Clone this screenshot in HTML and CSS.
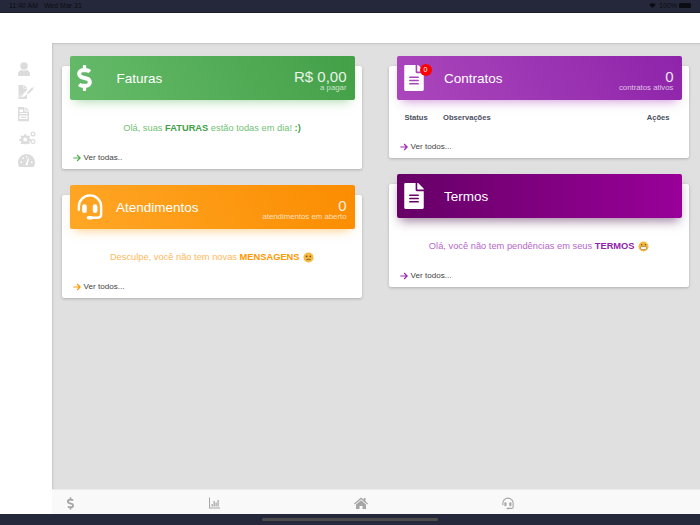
FILE: index.html
```html
<!DOCTYPE html>
<html lang="pt-BR">
<head>
<meta charset="utf-8">
<title>Painel</title>
<link rel="stylesheet" href="styles.css">
</head>
<body>
<svg class="defs" width="0" height="0" aria-hidden="true">
  <symbol id="i-dollar" viewBox="0 0 288 512"><path d="M209.2 233.4l-108-31.6C88.7 198.2 80 186.5 80 173.5c0-16.3 13.2-29.5 29.5-29.5h66.3c12.2 0 24.2 3.7 34.2 10.5 6.1 4.1 14.3 3.1 19.5-2l34.8-34c7.1-6.9 6.1-18.4-1.8-24.5C238 74.8 207.4 64.1 176 64V16c0-8.8-7.2-16-16-16h-32c-8.8 0-16 7.2-16 16v48h-2.5C45.8 64-5.4 118.7.5 183.6c4.2 46.1 39.4 83.6 83.8 96.6l102.5 30c12.5 3.7 21.2 15.3 21.2 28.3 0 16.3-13.2 29.5-29.5 29.5h-66.3C100 368 88 364.3 78 357.5c-6.1-4.1-14.3-3.1-19.5 2l-34.8 34c-7.1 6.9-6.1 18.4 1.8 24.5 24.5 19.2 55.1 29.9 86.5 30v48c0 8.8 7.2 16 16 16h32c8.8 0 16-7.2 16-16v-48.2c46.6-.9 90.3-28.6 105.7-72.7 21.5-61.6-14.6-124.8-72.5-141.7z"/></symbol>
  <symbol id="i-file" viewBox="0 0 384 512"><path d="M224 136V0H24C10.7 0 0 10.7 0 24v464c0 13.3 10.7 24 24 24h336c13.3 0 24-10.7 24-24V160H248c-13.2 0-24-10.8-24-24zm64 236c0 6.6-5.4 12-12 12H108c-6.6 0-12-5.4-12-12v-8c0-6.6 5.4-12 12-12h168c6.6 0 12 5.4 12 12v8zm0-64c0 6.6-5.4 12-12 12H108c-6.6 0-12-5.4-12-12v-8c0-6.6 5.4-12 12-12h168c6.6 0 12 5.4 12 12v8zm0-72v8c0 6.6-5.4 12-12 12H108c-6.6 0-12-5.4-12-12v-8c0-6.6 5.4-12 12-12h168c6.6 0 12 5.4 12 12zm96-114.1v6.1H256V0h6.1c6.4 0 12.5 2.5 17 7l97.9 98c4.5 4.5 7 10.6 7 16.9z"/></symbol>
  <symbol id="i-headset" viewBox="0 0 28 28"><path fill="none" stroke="currentColor" stroke-width="2.600" stroke-linecap="round" d="M2 17V13.500C2 6.500 7.500 1.500 14 1.500s12 5 12 12V22c0 2.500-1.500 3.500-4 3.500h-8"/><rect x="5.500" y="11" width="5" height="9.500" rx="2.400"/><rect x="17" y="11" width="5" height="9.500" rx="2.400"/><rect x="10.500" y="23.700" width="7" height="3.800" rx="1.900"/></symbol>
  <symbol id="i-arrow" viewBox="0 0 12 12"><path fill="none" stroke="currentColor" stroke-width="1.800" d="M0.500 6H10.500M6.200 1.500L10.700 6L6.200 10.500"/></symbol>
  <symbol id="i-user" viewBox="0 0 24 29"><circle cx="12" cy="8" r="7.500"/><path d="M0 25c0-6 3.500-9 7-9 1.500.8 3 1.200 5 1.200s3.500-.4 5-1.200c3.500 0 7 3 7 9 0 2.500-1 4-3 4H3c-2 0-3-1.500-3-4z"/></symbol>
  <symbol id="i-sign" viewBox="0 0 32 29"><path d="M1 0h10v7h7v3L9 19l-1 5 5-1 5-5v11H1z"/><path d="M12 0l6 6h-6z"/><path d="M19 14L28 5l3 3-9 9-4 1z"/><path d="M29 4l1-1 2 2-1 1z"/><path fill="none" stroke="#fff" stroke-width="1.400" d="M3 24c2-4 3-4 4-1s2 1 3 0"/></symbol>
  <symbol id="i-doc" viewBox="0 0 22 29"><path d="M0 0h13v9h9v20H0zM3 5v5h7V5zM3 12v2h16v-2zM3 17v7h16v-7z" fill-rule="evenodd"/><path d="M15 0l7 7h-7z"/><rect x="6" y="19.500" width="10" height="2.500"/></symbol>
  <symbol id="i-cogs" viewBox="0 0 36 28"><path d="M13 6h3l.8 3 2.400 1 2.700-1.500 2 2-1.500 2.700 1 2.400 3 .8v3l-3 .8-1 2.400 1.500 2.700-2 1.400-2.700-1-2.400.6-.8 0h-3l-.8 0-2.400-.6-2.700 1-2-1.400 1.500-2.700-1-2.400-3-.8v-3l3-.8 1-2.400-1.500-2.700 2-2 2.700 1.500 2.400-1zM14.500 13a4 4 0 1 0 0 8 4 4 0 0 0 0-8z" fill-rule="evenodd"/><circle cx="30" cy="6" r="3.800" fill="none" stroke="currentColor" stroke-width="2.400"/><circle cx="30" cy="21" r="3.800" fill="none" stroke="currentColor" stroke-width="2.400"/></symbol>
  <symbol id="i-gauge" viewBox="0 0 34 26"><path fill-rule="evenodd" d="M17 0C7.500 0 0 7.500 0 17c0 3 .7 6 2 9h30c1.300-3 2-6 2-9C34 7.500 26.500 0 17 0zM5 15h3v3H5zM9 7h3v3H9zM16 4h2.500v3H16zM26 15h3v3h-3zM15 22l5-14 2 .6-3 14.400z"/></symbol>
  <symbol id="i-chart" viewBox="0 0 24 24"><path d="M1 1h2v20h20v2H1z"/><rect x="6" y="14" width="2.500" height="5"/><rect x="10" y="8" width="2.500" height="11"/><rect x="14" y="11" width="2.500" height="8"/><rect x="18" y="6" width="2.500" height="13"/></symbol>
  <symbol id="i-home" viewBox="0 0 28 24"><path d="M14 1L0 13l1.500 2L14 4.500 26.500 15l1.500-2-5-4.300V2h-3.500v3.700z"/><path d="M14 6.500L4 15v9h7v-6h6v6h7v-9z"/></symbol>
  <symbol id="e-meh" viewBox="0 0 12 12"><circle cx="6" cy="6" r="5.500" fill="#f5b942"/><circle cx="4" cy="4.800" r=".9" fill="#6b4a14"/><circle cx="8" cy="4.800" r=".9" fill="#6b4a14"/><path d="M3.800 8.400Q6 7.300 8.200 8.400" fill="none" stroke="#6b4a14" stroke-width=".9"/></symbol>
  <symbol id="e-grin" viewBox="0 0 12 12"><circle cx="6" cy="6" r="5.500" fill="#f5b942"/><circle cx="4" cy="4" r=".8" fill="#6b4a14"/><circle cx="8" cy="4" r=".8" fill="#6b4a14"/><rect x="2.600" y="6.200" width="6.800" height="3" rx="1.400" fill="#fff" stroke="#6b4a14" stroke-width=".5"/></symbol>
</svg>

<div class="device">
  <header class="statusbar">
    <span class="clock">11:40 AM&nbsp;&nbsp; Wed Mar 31</span>
    <span class="sys">
      <svg class="wifi" viewBox="0 0 16 12"><path d="M8 12L0 4C4.500-.5 11.500-.5 16 4z"/></svg>
      100%
      <span class="battery"></span>
    </span>
  </header>
  <div class="topbar"></div>
  <div class="shell">
    <nav class="sidebar">
      <svg class="s-user"><use href="#i-user"/></svg>
      <svg class="s-sign"><use href="#i-sign"/></svg>
      <svg class="s-doc"><use href="#i-doc"/></svg>
      <svg class="s-cogs"><use href="#i-cogs"/></svg>
      <svg class="s-gauge"><use href="#i-gauge"/></svg>
    </nav>
    <div class="content">
      <main class="dashboard">
        <div class="column">
          <section class="card green">
            <div class="card-head">
              <svg class="ico ico-dollar"><use href="#i-dollar"/></svg>
              <h2>Faturas</h2>
              <div class="stat"><strong>R$ 0,00</strong><small>a pagar</small></div>
            </div>
            <p class="msg">Olá, suas <b>FATURAS</b> estão todas em dia! <b>:)</b></p>
            <a class="more"><svg><use href="#i-arrow"/></svg>Ver todas..</a>
          </section>
          <section class="card orange">
            <div class="card-head">
              <svg class="ico ico-headset"><use href="#i-headset"/></svg>
              <h2>Atendimentos</h2>
              <div class="stat"><strong>0</strong><small>atendimentos em aberto</small></div>
            </div>
            <p class="msg">Desculpe, você não tem novas <b>MENSAGENS</b> <svg class="emoji"><use href="#e-meh"/></svg></p>
            <a class="more"><svg><use href="#i-arrow"/></svg>Ver todos...</a>
          </section>
        </div>
        <div class="column">
          <section class="card purple">
            <div class="card-head">
              <span class="file-wrap">
                <svg class="ico ico-file"><use href="#i-file"/></svg>
                <span class="badge">0</span>
              </span>
              <h2>Contratos</h2>
              <div class="stat"><strong>0</strong><small>contratos ativos</small></div>
            </div>
            <div class="table-head"><span class="th-status">Status</span><span class="th-obs">Observações</span><span class="th-act">Ações</span></div>
            <a class="more"><svg><use href="#i-arrow"/></svg>Ver todos...</a>
          </section>
          <section class="card plum">
            <div class="card-head">
              <svg class="ico ico-file"><use href="#i-file"/></svg>
              <h2>Termos</h2>
            </div>
            <p class="msg">Olá, você não tem pendências em seus <b>TERMOS</b> <svg class="emoji"><use href="#e-grin"/></svg></p>
            <a class="more"><svg><use href="#i-arrow"/></svg>Ver todos...</a>
          </section>
        </div>
      </main>
      <footer class="tabbar">
        <svg class="t-dollar"><use href="#i-dollar"/></svg>
        <svg class="t-chart"><use href="#i-chart"/></svg>
        <svg class="t-home"><use href="#i-home"/></svg>
        <svg class="t-head"><use href="#i-headset"/></svg>
      </footer>
    </div>
  </div>
  <div class="homebar"><span></span></div>
</div>
</body>
</html>
```
FILE: styles.css
```css
* { box-sizing: border-box; }
html, body { margin: 0; height: 100%; }
body { font-family: "Liberation Sans", Arial, sans-serif; background: #fff; overflow: hidden; }
.defs { position: absolute; }
.device { width: 700px; height: 525px; display: flex; flex-direction: column; }
svg { fill: currentColor; display: block; }

.statusbar { height: 13px; flex: none; background: #25283a; border-bottom: 1px solid #1c1e2b; color: #0c0d14; font-size: 7px; display: flex; justify-content: space-between; align-items: center; padding: 0 9px 1px 9px; }
.sys { display: flex; align-items: center; gap: 2px; }
.wifi { width: 7px; height: 5px; margin-right: 1px; }
.battery { width: 12px; height: 5px; background: #0c0d14; border-radius: 1px; }

.topbar { height: 30px; flex: none; background: #fff; }
.shell { flex: 1; display: flex; min-height: 0; }
.sidebar { width: 52px; flex: none; background: #fff; color: #dcdcdc; display: flex; flex-direction: column; align-items: flex-start; padding: 18.500px 0 0 18px; }
.sidebar svg { flex: none; }
.s-user { width: 12px; height: 14.500px; }
.s-sign { width: 16px; height: 14.500px; margin-top: 8.500px; }
.s-doc { width: 11px; height: 14.500px; margin-top: 8px; }
.s-cogs { width: 18px; height: 14px; margin-top: 9.500px; }
.s-gauge { width: 17px; height: 13px; margin-top: 9px; }

.content { flex: 1; display: flex; flex-direction: column; min-width: 0; box-shadow: inset 2px 2px 2px -1px #c4c4c4; background: #e0e0e0; }
.dashboard { flex: 1; display: grid; grid-template-columns: 300px 300px; column-gap: 27px; align-items: start; padding: 23px 0 0 10px; }
.column { display: flex; flex-direction: column; }

.card { background: #fff; border-radius: 2px; box-shadow: 0 1px 3px rgba(0,0,0,.22); padding: 0 7.500px; height: 103px; margin-bottom: 26px; display: flex; flex-direction: column; }
.card.purple { height: 92px; }
.card-head { height: 44px; margin-top: -10px; flex: none; display: flex; align-items: center; border-radius: 2px; color: #fff; padding: 0 8px 0 7.500px; }
.green .card-head { background: linear-gradient(60deg, #66bb6a, #43a047); box-shadow: 0 6px 10px -5px rgba(76,175,80,.5); }
.orange .card-head { background: linear-gradient(60deg, #ffa726, #fb8c00); box-shadow: 0 6px 10px -5px rgba(255,152,0,.5); }
.purple .card-head { background: linear-gradient(60deg, #ab47bc, #8e24aa); box-shadow: 0 6px 10px -5px rgba(156,39,176,.5); }
.plum .card-head { background: linear-gradient(90deg, #660066, #990099); box-shadow: 0 6px 10px -3px rgba(60,0,60,.5); }
.ico { flex: none; }
.ico-dollar { width: 15px; height: 26px; margin-right: 24.500px; }
.ico-headset { width: 26px; height: 26px; margin-right: 13px; }
.ico-file { width: 20px; height: 26px; margin-right: 20px; }
.file-wrap { position: relative; display: block; flex: none; }
.badge { position: absolute; left: 15.500px; top: -1px; width: 12px; height: 12px; border-radius: 50%; background: #f00; color: #fff; font-size: 7px; line-height: 12px; text-align: center; }
h2 { margin: 0; font-size: 13.500px; font-weight: 400; flex: 1; }
.stat { text-align: right; display: flex; flex-direction: column; margin-top: 5px; }
.stat strong { font-size: 15px; font-weight: 400; line-height: 15px; color: #fff; opacity: .88; }
.stat small { font-size: 7.800px; line-height: 8px; color: rgba(255,255,255,.72); }

.msg { margin: 22px 0 0; font-size: 9.300px; line-height: 13px; text-align: center; flex: none; }
.msg b { font-weight: 700; }
.green .msg { color: #72bf75; } .green .msg b { color: #43a047; }
.orange .msg { color: #ffb95c; } .orange .msg b { color: #ff9800; }
.plum .msg { color: #b666c9; } .plum .msg b { color: #8e24aa; }
.emoji { width: 11px; height: 11px; display: inline-block; vertical-align: -2.500px; margin-left: 1px; }

.more { margin-top: auto; margin-bottom: 5px; margin-left: 3px; display: flex; align-items: center; font-size: 8.100px; line-height: 12px; color: #444; }
.more svg { width: 8px; height: 8px; margin-right: 3px; }
.green .more svg { color: #4caf50; }
.orange .more svg { color: #ff9800; }
.purple .more svg, .plum .more svg { color: #9c27b0; }

.table-head { display: flex; font-size: 7.600px; font-weight: 700; color: #4a5060; margin-top: 13px; padding: 0 0 0 8px; line-height: 10px; }
.th-status { width: 38.500px; }
.th-obs { flex: 1; }
.th-act { margin-right: 12px; }

.tabbar { height: 25px; flex: none; background: #f9f9f9; border-top: 1px solid #ececec; color: #a6a6a6; display: flex; align-items: center; padding: 2px 0 0 15px; }
.tabbar svg { flex: none; }
.t-dollar { width: 7px; height: 13px; }
.t-chart { width: 13px; height: 12px; margin-left: 134px; }
.t-home { width: 14px; height: 12px; margin-left: 133px; }
.t-head { width: 12px; height: 13px; margin-left: 134px; }

.homebar { height: 11px; flex: none; background: #25283a; display: flex; justify-content: center; align-items: center; }
.homebar span { width: 176px; height: 3px; border-radius: 2px; background: #4c4c4c; }
```
